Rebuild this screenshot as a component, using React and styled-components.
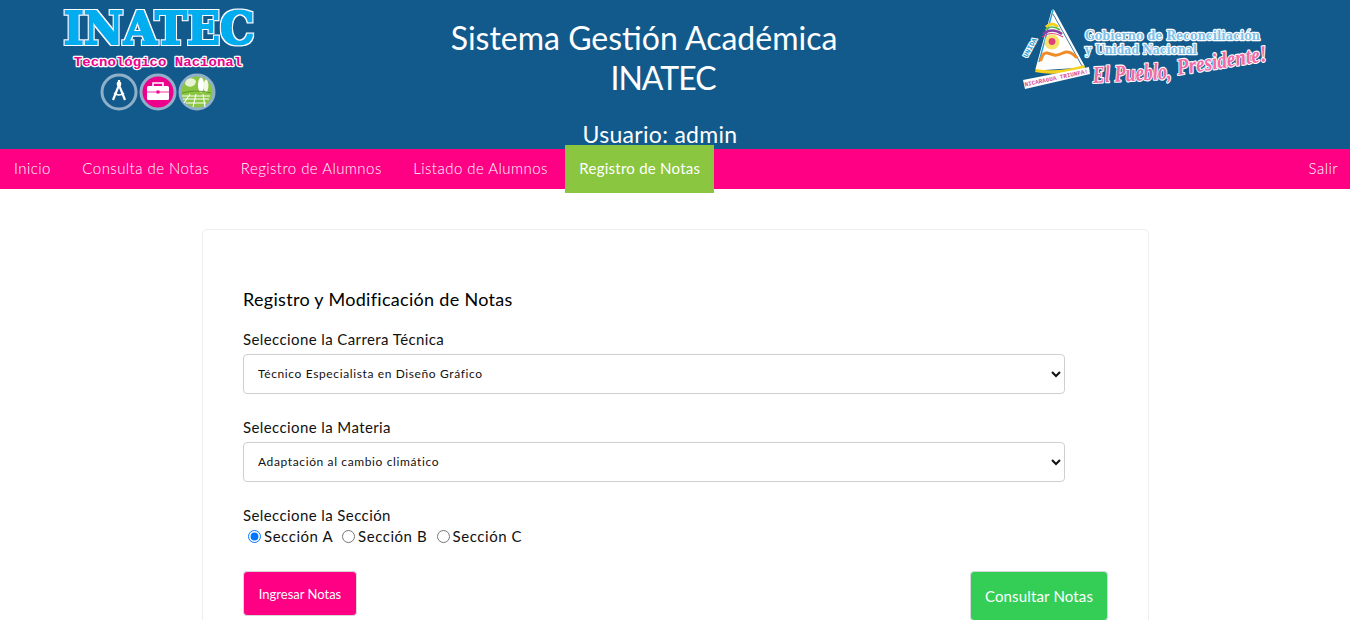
import React from 'react';
import styled, { createGlobalStyle } from 'styled-components';

const Global = createGlobalStyle`
  html, body {
    margin: 0;
    background: #fff;
    color: #111;
    font-family: "Lato", "Open Sans", sans-serif;
  }
  * { box-sizing: border-box; }
`;

const Header = styled.header`
  display: grid;
  grid-template-columns: 270px 1fr 270px;
  height: 149px;
  padding: 0 70px 0 40px;
  background: #135a8c;
  color: #fff;
`;

const TitleBlock = styled.div`
  padding-top: 18px;
  text-align: center;
`;

const TitleLine = styled.div`
  font-size: 32px;
  line-height: 40px;
  letter-spacing: ${(p) => p.$spacing || 0}px;
  padding-right: ${(p) => p.$pad || 0}px;
  padding-left: ${(p) => p.$padLeft || 0}px;
`;

const UserLine = styled.div`
  margin-top: 23px;
  font-size: 23px;
  line-height: 26px;
  letter-spacing: 0.3px;
`;

const Nav = styled.nav`
  display: flex;
  align-items: center;
  gap: 3.5px;
  height: 40px;
  background: #ff0084;
`;

const NavItem = styled.a`
  display: flex;
  align-items: center;
  height: ${(p) => (p.$active ? '48px' : '40px')};
  padding: 0 ${(p) => (p.$right ? '12px' : '14px')} 2px;
  font-size: 15px;
  font-weight: ${(p) => (p.$active ? 400 : 300)};
  letter-spacing: ${(p) => (p.$active ? '0.25px' : '0.45px')};
  color: #fff;
  background: ${(p) => (p.$active ? '#8ac640' : 'transparent')};
  margin-left: ${(p) => (p.$right ? 'auto' : '0')};
`;

const Card = styled.main`
  width: 947px;
  margin: 40px 0 40px 202px;
  padding: 60px 40px 40px;
  border: 1px solid #eeeeee;
  border-radius: 5px;
`;

const CardTitle = styled.h2`
  margin: 0 0 22px;
  font-size: 18px;
  font-weight: 400;
  line-height: 18px;
  letter-spacing: 0.3px;
  color: #000;
`;

const Label = styled.label`
  display: block;
  margin-bottom: ${(p) => (p.$tight ? '3px' : '6px')};
  font-size: 15px;
  line-height: 18px;
  letter-spacing: 0.4px;
`;

const Select = styled.select`
  display: block;
  width: 95%;
  height: 40px;
  margin-bottom: 24px;
  padding: 0 10px 2px;
  border: 1px solid #cfcfcf;
  border-radius: 4px;
  background: #fff;
  font-family: inherit;
  font-size: 12px;
  letter-spacing: 0.62px;
  color: #111;
`;

const RadioRow = styled.div`
  height: 18px;
  font-size: 15px;
  line-height: 18px;
  letter-spacing: 0.55px;
  input { margin: 3px 3px 3px 5px; vertical-align: -1px; }
`;

const Buttons = styled.div`
  display: flex;
  justify-content: space-between;
  align-items: flex-start;
  margin-top: 26px;
`;

const Button = styled.button`
  height: ${(p) => (p.$large ? '50px' : '45px')};
  width: ${(p) => (p.$large ? '138px' : '114px')};
  padding: 0;
  border: 1px solid #d8d8d8;
  border-radius: 4px;
  background: ${(p) => (p.$large ? '#34ce57' : '#ff0084')};
  color: #fff;
  font-family: inherit;
  font-size: ${(p) => (p.$large ? '15px' : '13px')};
  letter-spacing: ${(p) => (p.$large ? '0.15px' : '0')};
`;

const Logo = styled.svg`
  display: block;
  overflow: visible;
`;

function InatecLogo() {
  return (
    <Logo width="240" height="120" viewBox="0 0 240 120">
      <defs>
        {/* engorda la letra y le pone el borde blanco */}
        <filter id="inatecOutline" x="-10%" y="-20%" width="120%" height="140%">
          <feMorphology in="SourceGraphic" operator="dilate" radius="0.7" result="thick" />
          <feMorphology in="SourceAlpha" operator="dilate" radius="2.4" result="wide" />
          <feFlood floodColor="#fff" />
          <feComposite in2="wide" operator="in" result="outline" />
          <feMerge>
            <feMergeNode in="outline" />
            <feMergeNode in="thick" />
          </feMerge>
        </filter>
      </defs>
      <g filter="url(#inatecOutline)">
        <text transform="translate(119 44) scale(1.4 1.42)" textAnchor="middle" fontFamily="'DejaVu Serif', serif" fontWeight="700" fontSize="31" fill="#00aeef">INATEC</text>
      </g>
      <text transform="translate(118 65.5) scale(1.08 1)" textAnchor="middle" fontFamily="'Liberation Mono', monospace" fontWeight="700" fontSize="13" fill="#ec008c" stroke="#fff" strokeWidth="2.5" paintOrder="stroke" strokeLinejoin="round">Tecnológico Nacional</text>
      {/* compás */}
      <circle cx="79" cy="92" r="17" fill="#135a8c" stroke="#8fb0c8" strokeWidth="3" />
      <path d="M79 80v4M79 85l-6 15M79 85l6 15" stroke="#fff" strokeWidth="2.2" fill="none" />
      <path d="M74 93q5 4 10 0" stroke="#fff" strokeWidth="1.6" fill="none" />
      <circle cx="79" cy="84" r="2.4" fill="#fff" />
      {/* maletín */}
      <circle cx="118" cy="92" r="17" fill="#ec008c" stroke="#8fb0c8" strokeWidth="3" />
      <rect x="107" y="86" width="22" height="14" rx="1.5" fill="#fff" />
      <path d="M113 86v-3h10v3" stroke="#fff" strokeWidth="1.6" fill="none" />
      <path d="M107 92h22" stroke="#ec008c" strokeWidth="0.8" />
      <rect x="116.5" y="90.5" width="3" height="3" fill="#ec008c" />
      {/* campo */}
      <circle cx="157" cy="92" r="17" fill="#8ac640" stroke="#8fb0c8" strokeWidth="3" />
      <path d="M145 84a6 6 0 0 1 11-3a6 6 0 0 1-11 3z" fill="#e8f3d4" />
      <ellipse cx="161" cy="85" rx="3" ry="7.5" fill="#fff" />
      <ellipse cx="166" cy="86" rx="2.4" ry="6.5" fill="#f2f8e4" />
      <path d="M142 93q14-4 29 0" stroke="#5f9a2a" strokeWidth="1" fill="none" />
      <path d="M142 96l28 0M143 99l26 0M146 103l20 0M150 94l-6 9M156 94l-3 13M163 94l2 13" stroke="#fff" strokeWidth="1.1" fill="none" />
    </Logo>
  );
}

function GobiernoLogo() {
  return (
    <Logo width="270" height="100" viewBox="0 0 270 100">
      <path d="M43 11L27 69L73 66Z" fill="#fff" stroke="#fff" strokeWidth="3" strokeLinejoin="round" />
      <path d="M43 10L29 62" stroke="#2a9fd6" strokeWidth="1.4" fill="none" />
      <path d="M43 14L72 66" stroke="#135a8c" strokeWidth="0.8" fill="none" />
      <path d="M36 27Q42 21 48 27" stroke="#f6d21f" strokeWidth="3" fill="none" />
      <path d="M35 30Q42 24 50 30" stroke="#58b947" strokeWidth="1.6" fill="none" />
      <path d="M33 34Q42 27 52 34" stroke="#8a3fa0" strokeWidth="2.6" fill="none" />
      <path d="M32 37Q42 30 53 37" stroke="#e0407a" strokeWidth="1.2" fill="none" />
      <circle cx="42" cy="42" r="7.5" fill="#f7e36a" />
      <circle cx="42" cy="41.5" r="3.4" fill="#e0407a" />
      <path d="M31 60Q33 52 37 53T44 55T53 53T66 57" stroke="#f28c28" strokeWidth="3" fill="none" strokeLinecap="round" />
      <path d="M26 69Q48 73 74 65L75 68Q48 77 25 72Z" fill="#f6d21f" />
      <text transform="translate(17 58) rotate(-62)" fontFamily="'Liberation Mono', monospace" fontWeight="700" fontSize="7" fill="#2a9fd6" stroke="#fff" strokeWidth="2" paintOrder="stroke">UNIDA</text>
      <path d="M13 80L79 67L80 74L15 89Z" fill="#fff" />
      <text transform="translate(15 86.5) rotate(-12)" fontFamily="'Liberation Mono', monospace" fontWeight="700" fontSize="6" fill="#d9508f">NICARAGUA TRIUNFA!</text>
      <text x="75" y="40" fontFamily="'DejaVu Serif', serif" fontWeight="700" fontSize="12.5" textLength="175" lengthAdjust="spacingAndGlyphs" fill="#7cc0ea" stroke="#fff" strokeWidth="2.4" paintOrder="stroke" strokeLinejoin="round">Gobierno de Reconciliación</text>
      <text x="75" y="54" fontFamily="'DejaVu Serif', serif" fontWeight="700" fontSize="12.5" textLength="112" lengthAdjust="spacingAndGlyphs" fill="#7cc0ea" stroke="#fff" strokeWidth="2.4" paintOrder="stroke" strokeLinejoin="round">y Unidad Nacional</text>
      <text transform="translate(83 83) rotate(-3) scale(0.76 1)" fontFamily="'Liberation Serif', serif" fontStyle="italic" fontWeight="700" fontSize="24" fill="#f06aa8" stroke="#fff" strokeWidth="2.2" paintOrder="stroke" strokeLinejoin="round">El Pueblo,</text>
      <text transform="translate(168 75) rotate(-9) scale(0.84 1)" fontFamily="'Liberation Serif', serif" fontStyle="italic" fontWeight="700" fontSize="23" fill="#f06aa8" stroke="#fff" strokeWidth="2.2" paintOrder="stroke" strokeLinejoin="round">Presidente!</text>
    </Logo>
  );
}

export default function App() {
  return (
    <>
      <Global />
      <Header>
        <InatecLogo />
        <TitleBlock>
          <TitleLine $pad={32}>Sistema Gestión Académica</TitleLine>
          <TitleLine $padLeft={6} $spacing={-1}>INATEC</TitleLine>
          <UserLine>Usuario: admin</UserLine>
        </TitleBlock>
        <GobiernoLogo />
      </Header>
      <Nav>
        <NavItem>Inicio</NavItem>
        <NavItem>Consulta de Notas</NavItem>
        <NavItem>Registro de Alumnos</NavItem>
        <NavItem>Listado de Alumnos</NavItem>
        <NavItem $active>Registro de Notas</NavItem>
        <NavItem $right>Salir</NavItem>
      </Nav>
      <Card>
        <CardTitle>Registro y Modificación de Notas</CardTitle>
        <Label>Seleccione la Carrera Técnica</Label>
        <Select defaultValue="dg">
          <option value="dg">Técnico Especialista en Diseño Gráfico</option>
        </Select>
        <Label>Seleccione la Materia</Label>
        <Select defaultValue="acc">
          <option value="acc">Adaptación al cambio climático</option>
        </Select>
        <Label $tight>Seleccione la Sección</Label>
        <RadioRow>
          <input type="radio" name="seccion" defaultChecked />Sección A{' '}
          <input type="radio" name="seccion" />Sección B{' '}
          <input type="radio" name="seccion" />Sección C
        </RadioRow>
        <Buttons>
          <Button>Ingresar Notas</Button>
          <Button $large>Consultar Notas</Button>
        </Buttons>
      </Card>
    </>
  );
}
